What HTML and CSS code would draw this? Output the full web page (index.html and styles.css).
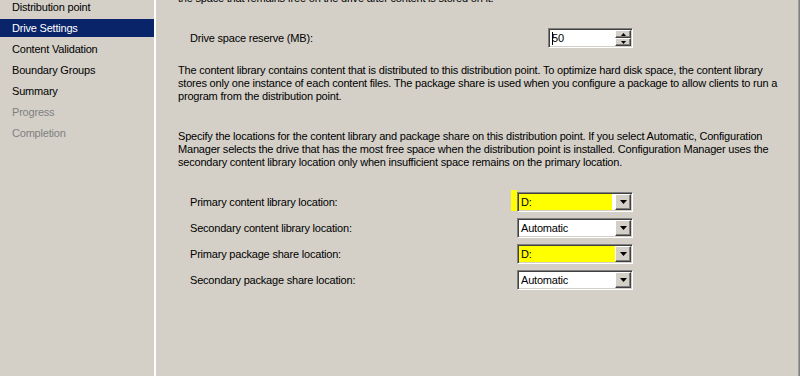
FILE: index.html
```html
<!DOCTYPE html>
<html lang="en">
<head>
<meta charset="UTF-8" />
<title>Drive Settings</title>
<link rel="stylesheet" href="styles.css">
</head>
<body>

<div class="wizard">
  <ul class="steps">
    <li>Distribution point</li>
    <li class="current">Drive Settings</li>
    <li>Content Validation</li>
    <li>Boundary Groups</li>
    <li>Summary</li>
    <li class="disabled">Progress</li>
    <li class="disabled">Completion</li>
  </ul>

  <div class="page">
    <p class="lead">the space that remains free on the drive after content is stored on it.</p>

    <div class="field-row spin-row">
      <label>Drive space reserve (MB):</label>
      <div class="spin">
        <span class="spin-value"><span class="caret"></span>50</span>
        <span class="spin-buttons">
          <span class="spin-btn"><svg width="5" height="3" viewBox="0 0 5 3"><polygon points="2.5,0 5,3 0,3" fill="#000"/></svg></span>
          <span class="spin-btn"><svg width="5" height="3" viewBox="0 0 5 3"><polygon points="0,0 5,0 2.5,3" fill="#000"/></svg></span>
        </span>
      </div>
    </div>

    <p class="note">The content library contains content that is distributed to this distribution point. To optimize hard disk space, the content library<br>
      stores only one instance of each content files. The package share is used when you configure a package to allow clients to run a<br>
      program from the distribution point.</p>

    <p class="note second">Specify the locations for the content library and package share on this distribution point. If you select Automatic, Configuration<br>
      Manager selects the drive that has the most free space when the distribution point is installed. Configuration Manager uses the<br>
      secondary content library location only when insufficient space remains on the primary location.</p>

    <div class="locations">
      <div class="field-row">
        <label>Primary content library location:</label>
        <div class="combo marked-short">
          <span class="marker"></span>
          <span class="combo-value">D:</span>
          <span class="combo-btn"><svg width="7" height="4" viewBox="0 0 7 4"><polygon points="0,0 7,0 3.5,4" fill="#000"/></svg></span>
        </div>
      </div>
      <div class="field-row">
        <label>Secondary content library location:</label>
        <div class="combo">
          <span class="combo-value">Automatic</span>
          <span class="combo-btn"><svg width="7" height="4" viewBox="0 0 7 4"><polygon points="0,0 7,0 3.5,4" fill="#000"/></svg></span>
        </div>
      </div>
      <div class="field-row">
        <label>Primary package share location:</label>
        <div class="combo marked-long">
          <span class="combo-value">D:</span>
          <span class="combo-btn"><svg width="7" height="4" viewBox="0 0 7 4"><polygon points="0,0 7,0 3.5,4" fill="#000"/></svg></span>
        </div>
      </div>
      <div class="field-row">
        <label>Secondary package share location:</label>
        <div class="combo">
          <span class="combo-value">Automatic</span>
          <span class="combo-btn"><svg width="7" height="4" viewBox="0 0 7 4"><polygon points="0,0 7,0 3.5,4" fill="#000"/></svg></span>
        </div>
      </div>
    </div>
  </div>
</div>

</body>
</html>
```

FILE: styles.css
```css
html, body {
  margin: 0;
  height: 100%;
  overflow: hidden;
}
body {
  font-family: "Liberation Sans", Arial, sans-serif;
  font-size: 11px;
  letter-spacing: -0.2px;
  color: #000;
  background: #d4d0c8;
}
.wizard {
  display: flex;
  width: 800px;
  height: 376px;
}
.steps {
  list-style: none;
  margin: 0;
  padding: 0;
  width: 154px;
  flex: none;
  border-right: 2px solid #fff;
}
.steps li {
  height: 18px;
  line-height: 18px;
  margin-top: 3px;
  padding-left: 12px;
}
.steps li:first-child {
  margin-top: -2px;
}
.steps li.current {
  background: #0a246a;
  color: #fff;
}
.steps li.disabled {
  color: #808080;
}
.page {
  flex: 1;
  padding-left: 22px;
  border-right: 1px solid #808080;
  box-shadow: inset -1px 0 0 #a0a0a0;
  position: relative;
}
.page::after {
  content: "";
  position: absolute;
  top: 0;
  right: -4px;
  width: 3px;
  height: 100%;
  background: #404040;
}
p {
  margin: 0;
  line-height: 13px;
}
.lead {
  margin-top: -8px;
}
.note {
  margin-top: 16px;
}
.note.second {
  margin-top: 27px;
}
.field-row {
  display: flex;
  align-items: center;
  padding-left: 12px;
  height: 20px;
}
.field-row label {
  width: 327px;
  flex: none;
}
.spin-row {
  margin-top: 23px;
}
.spin-row label {
  width: 358px;
}
.locations {
  margin-top: 23px;
  display: flex;
  flex-direction: column;
  gap: 6px;
}

/* classic sunken box */
.spin, .combo {
  position: relative;
  display: flex;
  box-sizing: border-box;
  height: 20px;
  background: #fff;
  border: 1px solid;
  border-color: #808080 #fff #fff #808080;
  box-shadow: inset 1px 1px 0 #404040, inset -1px -1px 0 #d4d0c8;
  padding: 1px;
}
.spin {
  width: 85px;
}
.combo {
  width: 116px;
}
.spin-value, .combo-value {
  flex: 1;
  line-height: 16px;
  padding-left: 2px;
  display: flex;
  align-items: center;
}
.caret {
  width: 1px;
  height: 13px;
  background: #000;
  margin-right: -1px;
}
.spin-buttons {
  width: 16px;
  display: flex;
  flex-direction: column;
}
.spin-btn, .combo-btn {
  box-sizing: border-box;
  background: #d4d0c8;
  border: 1px solid;
  border-color: #fff #404040 #404040 #fff;
  box-shadow: inset -1px -1px 0 #808080;
  display: flex;
  align-items: center;
  justify-content: center;
}
.spin-btn {
  height: 8px;
}
.combo-btn {
  width: 16px;
}

/* yellow highlighter marks */
.combo.marked-short {
  background: linear-gradient(to right, #ffff00 94px, #fff 94px);
}
.combo.marked-long {
  background: #ffff00;
}
.marker {
  position: absolute;
  left: -7px;
  top: -3px;
  width: 6px;
  height: 21px;
  background: #ffff00;
}
```
